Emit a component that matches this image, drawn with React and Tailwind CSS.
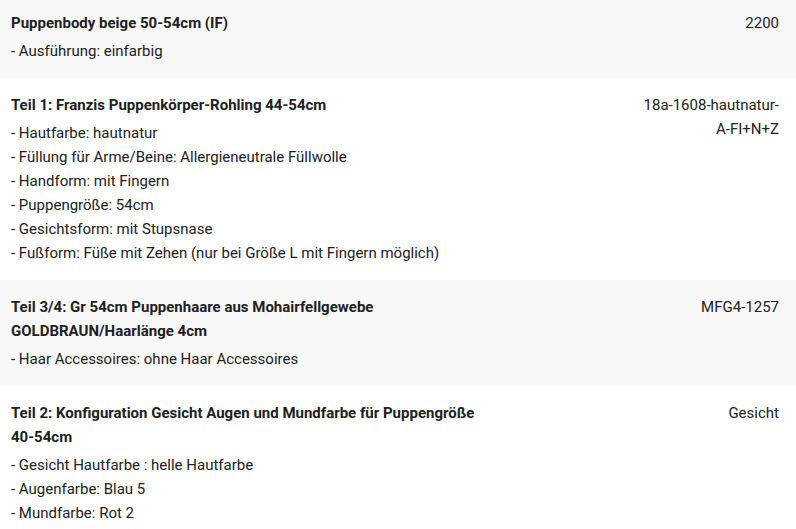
import React from "react";

const rows = [
  {
    bg: "bg-[#f8f8f8]",
    pt: "pt-[11px]",
    title: "Puppenbody beige 50-54cm (IF)",
    details: ["- Ausführung: einfarbig"],
    code: "2200",
  },
  {
    bg: "bg-white",
    pt: "pt-[15px]",
    title: "Teil 1: Franzis Puppenkörper-Rohling 44-54cm",
    details: [
      "- Hautfarbe: hautnatur",
      "- Füllung für Arme/Beine: Allergieneutrale Füllwolle",
      "- Handform: mit Fingern",
      "- Puppengröße: 54cm",
      "- Gesichtsform: mit Stupsnase",
      "- Fußform: Füße mit Zehen (nur bei Größe L mit Fingern möglich)",
    ],
    code: "18a-1608-hautnatur-A-FI+N+Z",
  },
  {
    bg: "bg-[#f8f8f8]",
    pt: "pt-[15px]",
    title: "Teil 3/4: Gr 54cm Puppenhaare aus Mohairfellgewebe GOLDBRAUN/Haarlänge 4cm",
    details: ["- Haar Accessoires: ohne Haar Accessoires"],
    code: "MFG4-1257",
  },
  {
    bg: "bg-white",
    pt: "pt-[15px]",
    title: "Teil 2: Konfiguration Gesicht Augen und Mundfarbe für Puppengröße 40-54cm",
    details: [
      "- Gesicht Hautfarbe : helle Hautfarbe",
      "- Augenfarbe: Blau 5",
      "- Mundfarbe: Rot 2",
    ],
    code: "Gesicht",
  },
];

export default function App() {
  return (
    <div
      className="w-[796px] h-[529px] overflow-hidden bg-white text-[15px] leading-[24px] text-[#212121]"
      style={{ fontFamily: "Roboto, 'Liberation Sans', sans-serif" }}
    >
      {rows.map((r, i) => (
        <div
          key={i}
          className={`flex justify-between ${r.bg} ${r.pt} pb-[15px] pl-[11px] pr-[17px]`}
        >
          <div className="w-[484px]">
            <div className="font-bold mb-[4px]">{r.title}</div>
            {r.details.map((d, j) => (
              <div key={j}>{d}</div>
            ))}
          </div>
          <div className="w-[145px] text-right">{r.code}</div>
        </div>
      ))}
    </div>
  );
}
